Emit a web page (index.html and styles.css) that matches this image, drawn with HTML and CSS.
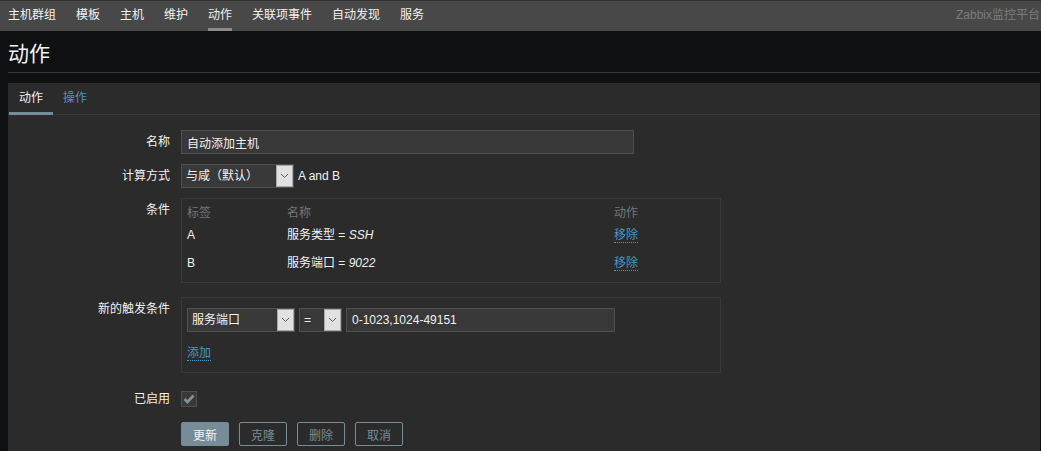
FILE: index.html
```html
<!DOCTYPE html>
<html lang="zh-CN">
<head>
    <meta charset="UTF-8">
    <meta name="viewport" content="width=device-width, initial-scale=1.0">
    <title>动作</title>
    <link rel="stylesheet" href="styles.css">
</head>
<body>

<header class="subnav">
    <ul class="subnav-menu">
        <li><a href="#">主机群组</a></li>
        <li><a href="#">模板</a></li>
        <li><a href="#">主机</a></li>
        <li><a href="#">维护</a></li>
        <li class="selected"><a href="#">动作</a></li>
        <li><a href="#">关联项事件</a></li>
        <li><a href="#">自动发现</a></li>
        <li><a href="#">服务</a></li>
    </ul>
    <div class="server-name">Zabbix监控平台</div>
</header>

<div class="page-header">
    <h1>动作</h1>
</div>

<div class="tabs-box">
    <ul class="tabs">
        <li class="active">动作</li>
        <li><a href="#">操作</a></li>
    </ul>

    <form class="form-list">
        <div class="form-row">
            <label class="form-label">名称</label>
            <div class="form-field">
                <input class="text-input name-input" type="text" value="自动添加主机">
            </div>
        </div>

        <div class="form-row">
            <label class="form-label">计算方式</label>
            <div class="form-field inline">
                <div class="select calc-select">
                    <span class="select-value">与咸（默认）</span>
                    <span class="select-arrow"><svg width="9" height="6" viewBox="0 0 9 6"><polyline points="1,1 4.5,4.5 8,1" fill="none" stroke="#5a5a5a" stroke-width="1"/></svg></span>
                </div>
                <span class="formula">A and B</span>
            </div>
        </div>

        <div class="form-row">
            <label class="form-label">条件</label>
            <div class="form-field">
                <div class="box cond-box">
                    <div class="cond-row cond-head">
                        <span>标签</span><span>名称</span><span>动作</span>
                    </div>
                    <div class="cond-row">
                        <span>A</span><span>服务类型 = <i>SSH</i></span><span><a class="link" href="#">移除</a></span>
                    </div>
                    <div class="cond-row second">
                        <span>B</span><span>服务端口 = <i>9022</i></span><span><a class="link" href="#">移除</a></span>
                    </div>
                </div>
            </div>
        </div>

        <div class="form-row">
            <label class="form-label">新的触发条件</label>
            <div class="form-field">
                <div class="box new-box">
                    <div class="new-cond">
                        <div class="select type-select">
                            <span class="select-value">服务端口</span>
                            <span class="select-arrow"><svg width="9" height="6" viewBox="0 0 9 6"><polyline points="1,1 4.5,4.5 8,1" fill="none" stroke="#5a5a5a" stroke-width="1"/></svg></span>
                        </div>
                        <div class="select op-select">
                            <span class="select-value">=</span>
                            <span class="select-arrow"><svg width="9" height="6" viewBox="0 0 9 6"><polyline points="1,1 4.5,4.5 8,1" fill="none" stroke="#5a5a5a" stroke-width="1"/></svg></span>
                        </div>
                        <input class="text-input value-input" type="text" value="0-1023,1024-49151">
                    </div>
                    <div class="add-row"><a class="link" href="#">添加</a></div>
                </div>
            </div>
        </div>

        <div class="form-row">
            <label class="form-label">已启用</label>
            <div class="form-field">
                <span class="checkbox"><svg width="14" height="14" viewBox="0 0 14 14"><polyline points="2.5,7 5.5,10 11.5,3.5" fill="none" stroke="#7d93a0" stroke-width="2.6"/></svg></span>
            </div>
        </div>

        <div class="form-buttons">
            <button type="button" class="btn btn-main">更新</button>
            <button type="button" class="btn btn-alt">克隆</button>
            <button type="button" class="btn btn-alt">删除</button>
            <button type="button" class="btn btn-alt">取消</button>
        </div>
    </form>
</div>

</body>
</html>
```

FILE: styles.css
```css
body {
    margin: 0;
    padding: 0;
    background-color: #0e1012;
    color: #f2f2f2;
    font-family: "Liberation Sans", "Noto Sans CJK SC", sans-serif;
    font-size: 12px;
    overflow: hidden;
}

a {
    text-decoration: none;
}

/* top sub navigation */
.subnav {
    display: flex;
    height: 31px;
    box-sizing: border-box;
    border-top: 1px solid #303030;
    background-color: #484848;
}

.subnav-menu {
    display: flex;
    gap: 20px;
    margin: 0;
    padding: 0 0 0 8px;
    list-style: none;
}

.subnav-menu li a {
    display: block;
    height: 30px;
    box-sizing: border-box;
    line-height: 29px;
    color: #f2f2f2;
}

.subnav-menu li.selected a {
    border-bottom: 3px solid #8c8c8c;
}

.server-name {
    margin-left: auto;
    padding-right: 1px;
    line-height: 29px;
    color: #7c7c7c;
}

/* page title */
.page-header {
    height: 42px;
    box-sizing: border-box;
    margin: 0 1px 0 8px;
    padding-top: 5px;
    border-bottom: 1px solid #383838;
}

.page-header h1 {
    margin: 0;
    font-size: 21px;
    font-weight: normal;
    line-height: 36px;
    color: #f2f2f2;
}

/* tabs */
.tabs-box {
    margin: 10px 1px 0 8px;
    padding-bottom: 20px;
    background-color: #2b2b2b;
}

.tabs {
    display: flex;
    height: 31px;
    margin: 0;
    padding: 0 0 0 1px;
    list-style: none;
    border-bottom: 1px solid #383838;
}

.tabs li {
    height: 32px;
    box-sizing: border-box;
    padding: 2px 10px 0;
    line-height: 27px;
    border-bottom: 3px solid transparent;
}

.tabs li.active {
    border-bottom-color: #768d99;
    color: #f2f2f2;
}

.tabs li a {
    color: #4796c4;
}

/* form */
.form-list {
    padding-top: 10px;
}

.form-row {
    display: flex;
    padding: 5px 0;
}

.form-label {
    flex-shrink: 0;
    width: 162px;
    text-align: right;
    line-height: 24px;
    color: #f2f2f2;
}

.form-field {
    margin-left: 11px;
}

.form-field.inline {
    display: flex;
    align-items: center;
}

.text-input {
    height: 24px;
    box-sizing: border-box;
    margin: 0;
    padding: 0 5px;
    background-color: #383838;
    border: 1px solid #4f4f4f;
    color: #f2f2f2;
    font-family: inherit;
    font-size: 12px;
    outline: none;
}

.name-input {
    width: 453px;
}

.select {
    display: flex;
    height: 24px;
    box-sizing: border-box;
    background-color: #383838;
    border: 1px solid #4f4f4f;
}

.select-value {
    flex: 1;
    padding-left: 4px;
    line-height: 22px;
    color: #f2f2f2;
    white-space: nowrap;
}

.select-arrow {
    display: flex;
    align-items: center;
    justify-content: center;
    width: 17px;
    box-sizing: border-box;
    background-color: #e1e1e1;
    border: 1px solid #a8a8a8;
}

.calc-select {
    width: 113px;
}

.formula {
    margin-left: 4px;
}

/* condition boxes */
.box {
    width: 540px;
    box-sizing: border-box;
    margin-bottom: 4px;
    border: 1px solid #383838;
}

.cond-box {
    padding: 4px 5px 7px;
}

.cond-row {
    display: grid;
    grid-template-columns: 100px 327px 1fr;
    line-height: 24px;
}

.cond-row.cond-head {
    line-height: 20px;
    color: #777777;
}

.cond-row.second {
    margin-top: 4px;
}

.link {
    color: #4796c4;
    border-bottom: 1px dotted #4796c4;
}

.new-box {
    padding: 10px 5px 7px;
}

.new-cond {
    display: flex;
    align-items: center;
}

.type-select {
    width: 108px;
    margin-right: 4px;
}

.op-select {
    width: 43px;
    margin-right: 4px;
}

.value-input {
    width: 269px;
}

.add-row {
    margin-top: 9px;
    line-height: 24px;
}

.checkbox {
    display: flex;
    align-items: center;
    justify-content: center;
    width: 16px;
    height: 16px;
    box-sizing: border-box;
    margin-top: 4px;
    background-color: #383838;
    border: 1px solid #4f4f4f;
}

/* buttons */
.form-buttons {
    display: flex;
    gap: 10px;
    padding: 6px 0 0 173px;
}

.btn {
    width: 48px;
    height: 24px;
    box-sizing: border-box;
    padding: 0;
    border: 1px solid #768d99;
    border-radius: 2px;
    font-family: inherit;
    font-size: 12px;
}

.btn-main {
    background-color: #768d99;
    color: #f2f2f2;
}

.btn-alt {
    background-color: transparent;
    color: #768d99;
}
```
